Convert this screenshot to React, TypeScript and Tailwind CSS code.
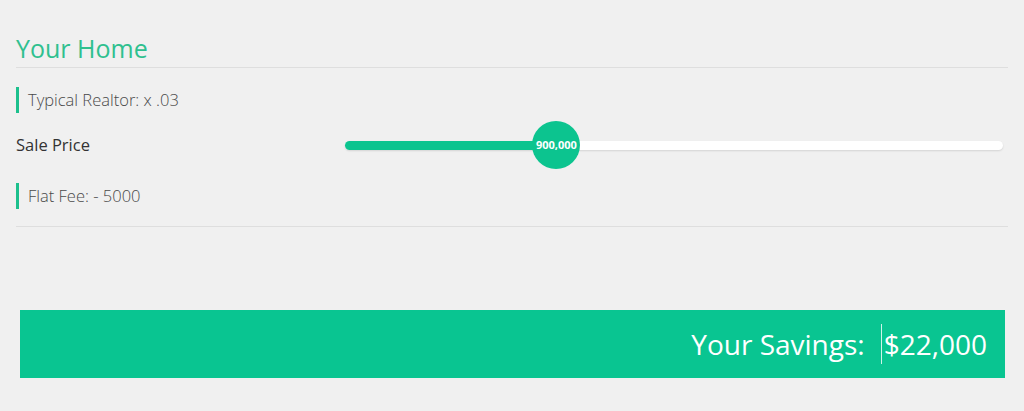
import React from 'react';

const font = { fontFamily: '"Open Sans", "Noto Sans", "Liberation Sans", sans-serif' };

const Note = ({ children }: { children: React.ReactNode }) => (
  <div className="flex items-center h-[26px] border-l-[3px] border-[#1cc08d] pl-[9px] text-[16.5px] font-light text-[#4a4a4a]">
    {children}
  </div>
);

const PriceSlider = ({ value, min, max }: { value: number; min: number; max: number }) => {
  const pct = ((value - min) / (max - min)) * 100;
  return (
    <div className="relative flex-1 h-[9px] rounded-full bg-white shadow-[0_1px_2px_rgba(0,0,0,0.12)]">
      <div className="absolute left-0 top-0 h-full rounded-full bg-[#0cc48f]" style={{ width: `${pct}%` }} />
      <div
        className="absolute top-1/2 -translate-x-1/2 -translate-y-1/2 w-[48px] h-[48px] rounded-full bg-[#0cc48f] flex items-center justify-center text-[11px] font-bold text-white"
        style={{ left: `${pct}%` }}
      >
        {value.toLocaleString('en-US')}
      </div>
    </div>
  );
};

export default function App() {
  return (
    <div className="w-[1024px] h-[411px] bg-[#f0f0f0] px-4 pt-[33px]" style={font}>
      <h2 className="text-[25px] leading-[30px] text-[#2fc08f] pb-[4px] border-b border-[#dedede]">Your Home</h2>

      <div className="mt-[19px]">
        <Note>Typical Realtor: x .03</Note>
      </div>

      <div className="flex items-center mt-[18px] h-[28px] pr-[5px]">
        <div className="w-[329px] text-[16.5px] text-[#333]">Sale Price</div>
        <PriceSlider value={900000} min={100000} max={2590000} />
      </div>

      <div className="mt-[24px] pb-[17px] border-b border-[#dedede]">
        <Note>Flat Fee: - 5000</Note>
      </div>

      <div className="mt-[83px] ml-1 mr-[3px] h-[68px] bg-[#09c591] flex items-center justify-end pr-[18px] text-white">
        <span className="text-[28px] mr-4">Your Savings:</span>
        <span className="w-px h-[40px] bg-white/80 mr-[2px]" />
        <span className="text-[28px]">$22,000</span>
      </div>
    </div>
  );
}
